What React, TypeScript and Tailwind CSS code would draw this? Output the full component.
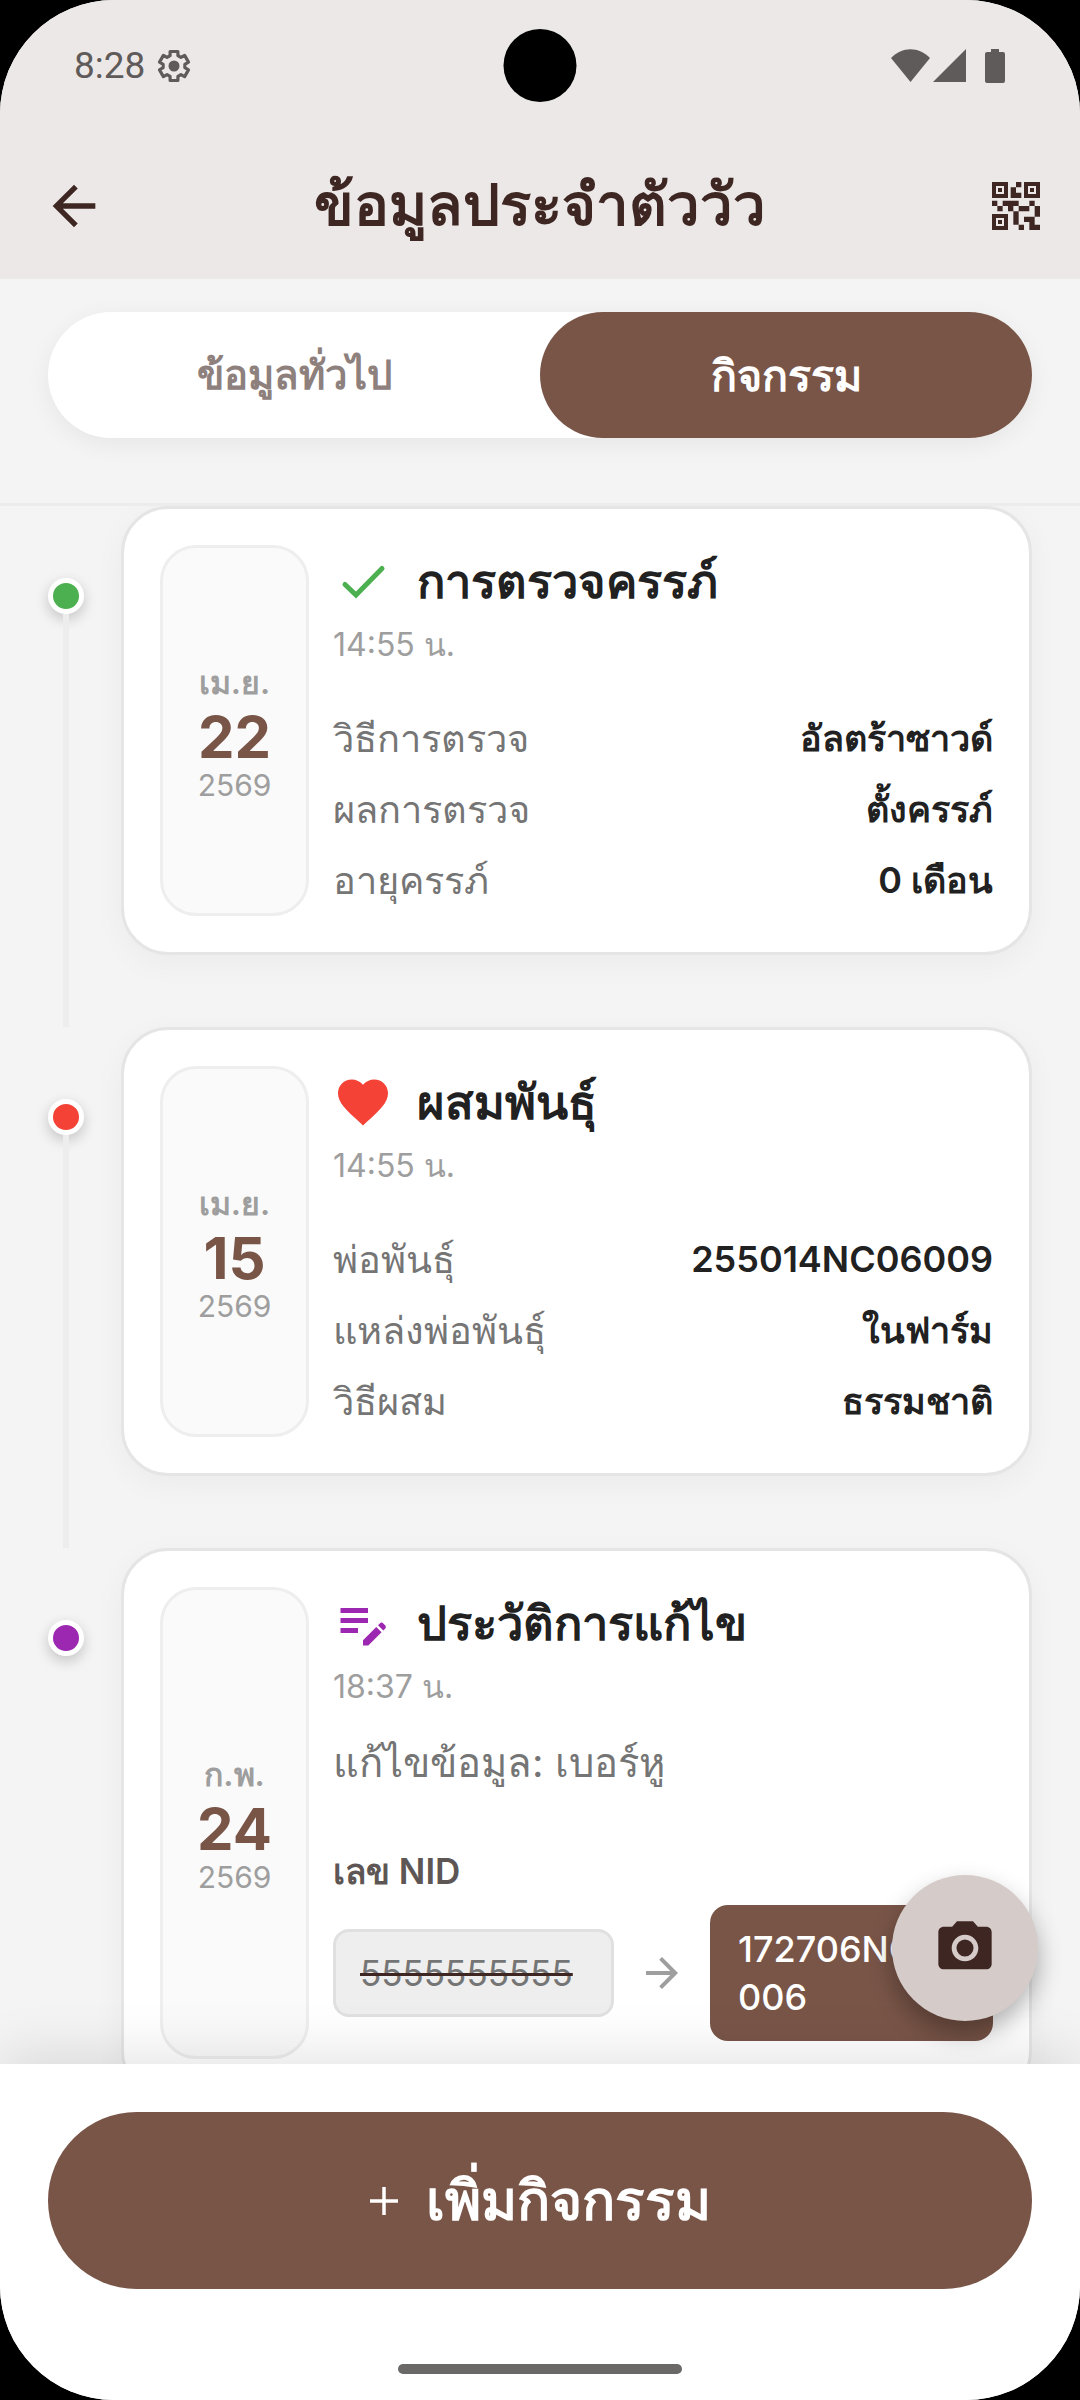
import type { ReactNode } from "react"
import { clsx } from "clsx"
import { MdArrowBack, MdArrowForward, MdCameraAlt, MdEditNote, MdFavorite, MdQrCode2 } from "react-icons/md"

type Activity = {
  month: string
  day: string
  year: string
  title: string
  time: string
  icon: ReactNode
  dot: string
  rows?: { label: string; value: string }[]
  change?: { note: string; field: string; before: string; after: string }
}

function CheckIcon() {
  return (
    <svg viewBox="0 0 60 60" className="size-15 text-[#4caf50]" aria-hidden="true">
      <path
        d="M12 33.5 23 44 49 17.5"
        fill="none"
        stroke="currentColor"
        strokeWidth="5"
        strokeLinecap="round"
      />
    </svg>
  )
}

function GearIcon() {
  return (
    <svg viewBox="0 0 34 34" className="size-[34px]" aria-hidden="true">
      <path
        d="M13.060 6.730 13.120 2.510H20.880L20.940 6.730 23.920 8.450 27.610 6.390 31.490 13.120 27.860 15.280V18.720L31.490 20.880 27.610 27.610 23.920 25.550 20.940 27.270 20.880 31.490H13.120L13.060 27.270 10.080 25.550 6.390 27.610 2.510 20.880 6.140 18.720V15.280L2.510 13.120 6.390 6.390 10.080 8.450Z"
        fill="none"
        stroke="currentColor"
        strokeWidth="3.200"
        strokeLinejoin="round"
      />
      <circle cx="17" cy="17" r="5.500" fill="currentColor" />
    </svg>
  )
}

const activities: Activity[] = [
  {
    month: "เม.ย.",
    day: "22",
    year: "2569",
    title: "การตรวจครรภ์",
    time: "14:55 น.",
    icon: <CheckIcon />,
    dot: "bg-[#4caf50]",
    rows: [
      { label: "วิธีการตรวจ", value: "อัลตร้าซาวด์" },
      { label: "ผลการตรวจ", value: "ตั้งครรภ์" },
      { label: "อายุครรภ์", value: "0 เดือน" }
    ]
  },
  {
    month: "เม.ย.",
    day: "15",
    year: "2569",
    title: "ผสมพันธุ์",
    time: "14:55 น.",
    icon: <MdFavorite className="size-15 text-[#f44336]" aria-hidden="true" />,
    dot: "bg-[#f44336]",
    rows: [
      { label: "พ่อพันธุ์", value: "255014NC06009" },
      { label: "แหล่งพ่อพันธุ์", value: "ในฟาร์ม" },
      { label: "วิธีผสม", value: "ธรรมชาติ" }
    ]
  },
  {
    month: "ก.พ.",
    day: "24",
    year: "2569",
    title: "ประวัติการแก้ไข",
    time: "18:37 น.",
    icon: <MdEditNote className="size-15 text-[#9c27b0]" aria-hidden="true" />,
    dot: "bg-[#9c27b0]",
    change: {
      note: "แก้ไขข้อมูล: เบอร์หู",
      field: "เลข NID",
      before: "5555555555",
      after: "172706NC06006"
    }
  }
]

function StatusBar() {
  return (
    <div className="relative flex h-33 items-center justify-between pr-[75px] pl-[74px] text-[#5f5b5a]">
      <div className="flex items-center gap-3">
        <span className="font-[Roboto] text-[37px] leading-10">8:28</span>
        <GearIcon />
      </div>
      <div className="absolute top-[29px] left-1/2 size-[73px] -translate-x-1/2 rounded-full bg-black" />
      <svg viewBox="0 0 114 34" className="h-[34px] w-[114px]" fill="currentColor" aria-hidden="true">
        <path d="M0 9C11-2.700 28-2.700 39 9L19.500 33z" />
        <path d="M42 33 75 0v33z" />
        <path d="M100 0h8v3h4q2 0 2 2v27q0 2-2 2H96q-2 0-2-2V5q0-2 2-2h4z" />
      </svg>
    </div>
  )
}

function Header() {
  return (
    <header className="bg-[#ece8e7] text-[#3e2723]">
      <StatusBar />
      <div className="flex h-[147px] items-center justify-between px-8">
        <button type="button" aria-label="ย้อนกลับ" className="flex h-21 w-21 items-center justify-center">
          <MdArrowBack className="size-16" />
        </button>
        <h1 className="pb-1 text-[58px] leading-20 font-bold">ข้อมูลประจำตัววัว</h1>
        <button type="button" aria-label="คิวอาร์โค้ด" className="flex h-21 w-21 items-center justify-end">
          <MdQrCode2 className="size-16" />
        </button>
      </div>
    </header>
  )
}

function Tabs() {
  return (
    <div className="border-b-3 border-[#ececec] px-12 pt-[33px] pb-[65px]">
      <div
        role="tablist"
        className="flex h-[126px] rounded-full bg-white font-semibold shadow-[0_6px_24px_rgba(0,0,0,0.06)]"
      >
        <button type="button" role="tab" aria-selected="false" className="flex-1 rounded-full text-[40px] text-[#8d807d]">
          ข้อมูลทั่วไป
        </button>
        <button type="button" role="tab" aria-selected="true" className="flex-1 rounded-full bg-[#795548] text-[43px] text-white">
          กิจกรรม
        </button>
      </div>
    </div>
  )
}

function DateBox({ month, day, year }: Pick<Activity, "month" | "day" | "year">) {
  return (
    <div className="flex w-[149px] shrink-0 flex-col items-center justify-center rounded-[36px] border-3 border-[#eeeeee] bg-[#fafafa] text-[#9e9e9e]">
      <span className="text-[32px] leading-12 font-semibold">{month}</span>
      <span className="text-[58px] leading-15 font-bold text-[#795548]">{day}</span>
      <span className="text-[30px] leading-9">{year}</span>
    </div>
  )
}

function Change({ note, field, before, after }: NonNullable<Activity["change"]>) {
  return (
    <div className="pb-[18px]">
      <p className="mt-[22px] text-[40px] leading-15 text-[#757575]">{note}</p>
      <p className="mt-12 text-[35px] leading-15 font-semibold text-[#5d5654]">{field}</p>
      <div className="mt-1 flex items-center">
        <del className="flex-1 rounded-2xl border-3 border-[#e0e0e0] bg-[#eeeeee] px-6 py-[17px] text-[35px] leading-12 text-[#757575] decoration-[#3e2723] decoration-3">
          {before}
        </del>
        <MdArrowForward className="mx-6 size-12 text-[#9e9e9e]" aria-label="เปลี่ยนเป็น" />
        <ins className="flex-1 rounded-[18px] bg-[#795548] px-7 py-5 text-[36px] leading-12 font-medium break-all text-white no-underline">
          {after}
        </ins>
      </div>
    </div>
  )
}

function ActivityItem({ activity, last }: { activity: Activity; last: boolean }) {
  return (
    <li className="flex">
      <div className="flex w-[73px] shrink-0 flex-col pt-18">
        <span
          className={clsx(
            "size-9 shrink-0 rounded-full border-5 border-white shadow-[0_5px_14px_rgba(0,0,0,0.2)]",
            activity.dot
          )}
        />
        {!last && <span className="ml-[15px] w-1.5 flex-1 bg-[#ededed]" />}
      </div>
      <div className="min-w-0 flex-1 pb-18">
        <article className="flex gap-6 rounded-[47px] border-3 border-[#e5e5e5] bg-white p-9 shadow-[0_8px_32px_rgba(0,0,0,0.04)]">
          <DateBox month={activity.month} day={activity.day} year={activity.year} />
          <div className="min-w-0 flex-1">
            <div className="flex h-18 items-center gap-6">
              {activity.icon}
              <h2 className="text-[47px] leading-18 font-semibold text-[#212121]">{activity.title}</h2>
            </div>
            <p className="mt-1 text-[32px] leading-12 text-[#9e9e9e]">{activity.time}</p>
            {activity.rows && (
              <dl className="mt-[34px]">
                {activity.rows.map((row) => (
                  <div key={row.label} className="flex justify-between py-2 leading-[55px]">
                    <dt className="text-[38px] text-[#757575]">{row.label}</dt>
                    <dd className="text-[36px] font-semibold text-[#212121]">{row.value}</dd>
                  </div>
                ))}
              </dl>
            )}
            {activity.change && <Change {...activity.change} />}
          </div>
        </article>
      </div>
    </li>
  )
}

function BottomBar() {
  return (
    <footer className="relative z-10 bg-white px-12 pt-12 pb-[26px] shadow-[0_-12px_50px_rgba(0,0,0,0.1)]">
      <button
        type="button"
        className="flex h-[177px] w-full items-center justify-center gap-7 rounded-full bg-[#795548] text-[55px] font-bold text-white"
      >
        <svg viewBox="0 0 28 28" className="size-7" aria-hidden="true">
          <path d="M14 0v28M0 14h28" stroke="currentColor" strokeWidth="3.500" />
        </svg>
        เพิ่มกิจกรรม
      </button>
      <div className="mx-auto mt-[75px] h-2.5 w-71 rounded-full bg-[#6b6968]" />
    </footer>
  )
}

export default function App() {
  return (
    <div className="h-screen bg-black">
      <div className="flex h-full flex-col overflow-hidden rounded-[114px] bg-[#f4f4f4] font-[Inter,sans-serif]">
        <Header />
        <Tabs />
        <div className="relative min-h-0 flex-1">
          <main className="h-full overflow-hidden px-12">
            <ol>
              {activities.map((activity, i) => (
                <ActivityItem key={activity.title} activity={activity} last={i === activities.length - 1} />
              ))}
            </ol>
          </main>
          <button
            type="button"
            aria-label="ถ่ายรูป"
            className="absolute right-[42px] bottom-[43px] z-20 flex size-[146px] items-center justify-center rounded-full bg-[#d5cbc9] text-[#3e2723] shadow-[0_12px_24px_rgba(0,0,0,0.3)]"
          >
            <MdCameraAlt className="size-16" />
          </button>
        </div>
        <BottomBar />
      </div>
    </div>
  )
}
